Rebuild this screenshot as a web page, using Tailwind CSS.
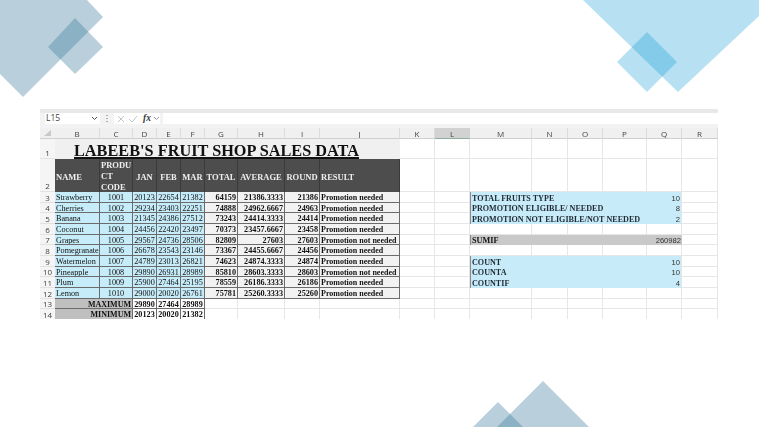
<!DOCTYPE html>
<html lang="en">
<head>
  <meta charset="UTF-8">
  <title>Labeeb's Fruit Shop Sales Data</title>
  <script src="https://cdn.jsdelivr.net/npm/@tailwindcss/browser@4"></script>
</head>
<body class="bg-white">
  <div class="relative w-[759px] h-[427px] overflow-hidden bg-white">
    <!-- background diamonds -->
    <svg class="absolute inset-0" width="759" height="427">
      <g fill="#337699" fill-opacity=".34">
        <polygon points="0,0 87,0 103,17 23,97 0,74"/>
        <polygon points="75,18 103,47 75,74 48,47"/>
        <polygon points="543,381 589,427 497,427"/>
        <polygon points="498,402 523,427 473,427"/>
      </g>
      <g fill="#0798d2" fill-opacity=".29">
        <polygon points="583,0 759,0 759,16 678,92"/>
        <polygon points="647,32 677,62 647,92 617,62"/>
      </g>
    </svg>

    <div class="relative pt-[109px] pl-[40px] w-[718px] font-['Liberation_Serif',serif] blur-[0.3px]">
      <!-- formula bar -->
      <div class="h-[4px] bg-[#e8e8e8]"></div>
      <div class="h-[15px] bg-[#f3f3f3] flex items-start gap-[3px] pl-[5px] font-['Open_Sans',sans-serif] text-[#444]">
        <div class="w-[55px] h-[11px] bg-white flex items-center justify-between pl-[1px] pr-[2px] text-[8.5px]">
          <span>L15</span>
          <svg width="7" height="5" viewBox="0 0 7 5"><path d="M1 1l2.500 2.500L6 1" fill="none" stroke="#555"/></svg>
        </div>
        <div class="w-[8px] h-[11px] flex items-center justify-center">
          <svg width="2" height="7" viewBox="0 0 2 7" fill="#666"><rect x="0.500" width="1" height="1"/><rect x="0.500" y="3" width="1" height="1"/><rect x="0.500" y="6" width="1" height="1"/></svg>
        </div>
        <div class="w-[46px] h-[11px] bg-white flex items-center gap-[3px] pl-[3px]">
          <svg width="8" height="8" viewBox="0 0 8 8"><path d="M1 1l6 6M7 1L1 7" stroke="#c4c4c4" fill="none"/></svg>
          <svg width="10" height="8" viewBox="0 0 10 8"><path d="M1 4l3 3 5-6" stroke="#c4c4c4" fill="none"/></svg>
          <span class="w-[9px] pl-[2px] font-['Liberation_Serif',serif] italic font-bold text-[9.5px] leading-none text-[#333]">fx</span>
          <svg width="7" height="5" viewBox="0 0 7 5"><path d="M1 1l2.500 2.500L6 1" fill="none" stroke="#999"/></svg>
        </div>
        <div class="flex-1 h-[11px] bg-white"></div>
      </div>

      <!-- sheet, filled in by the script below -->
      <div id="sheet" class="h-[191px] overflow-hidden grid grid-cols-[15px_45px_33px_24px_24px_24px_33px_47px_35px_80px_35px_35px_62px_36px_35px_44px_35px_36px] grid-rows-[11px_20px_33px_repeat(12,10.67px)] text-[8.2px] leading-[9px] text-[#111]"></div>
    </div>
  </div>

  <script>
    const sheet = document.getElementById("sheet");

    const cell = (html, className) => {
      const el = document.createElement("div");
      el.className = "flex whitespace-nowrap overflow-hidden min-w-0 px-[1px] " + className;
      el.innerHTML = html;
      sheet.appendChild(el);
    };

    const empty = (n = 1) => {
      for (let i = 0; i < n; i++) cell("", "border-r border-b border-[#e6e6e6]");
    };

    const rowHead = (n) => cell(n, "justify-center bg-[#f5f5f5] border-b border-[#e2e2e2] font-['Open_Sans',sans-serif] text-[8px] text-[#444] " +
      (n < 3 ? "items-end pb-[1px]" : "items-center pt-[1px]"));

    const fruits = [
      ["Strawberry", 1001, 20123, 22654, 21382, 64159, "21386.3333", 21386, "Promotion needed"],
      ["Cherries", 1002, 29234, 23403, 22251, 74888, "24962.6667", 24963, "Promotion needed"],
      ["Banana", 1003, 21345, 24386, 27512, 73243, "24414.3333", 24414, "Promotion needed"],
      ["Coconut", 1004, 24456, 22420, 23497, 70373, "23457.6667", 23458, "Promotion needed"],
      ["Grapes", 1005, 29567, 24736, 28506, 82809, "27603", 27603, "Promotion not needed"],
      ["Pomegranate", 1006, 26678, 23543, 23146, 73367, "24455.6667", 24456, "Promotion needed"],
      ["Watermelon", 1007, 24789, 23013, 26821, 74623, "24874.3333", 24874, "Promotion needed"],
      ["Pineapple", 1008, 29890, 26931, 28989, 85810, "28603.3333", 28603, "Promotion not needed"],
      ["Plum", 1009, 25900, 27464, 25195, 78559, "26186.3333", 26186, "Promotion needed"],
      ["Lemon", 1010, 29000, 20020, 26761, 75781, "25260.3333", 25260, "Promotion needed"]
    ];

    // right hand summary block, keyed by sheet row
    const summary = {
      3: ["TOTAL FRUITS TYPE", 10],
      4: ["PROMOTION ELIGIBLE/ NEEDED", 8],
      5: ["PROMOTION NOT ELIGIBLE/NOT NEEDED", 2],
      9: ["COUNT", 10],
      10: ["COUNTA", 10],
      11: ["COUNTIF", 4]
    };

    const blueLabel = "items-center pt-[1.500px] col-span-4 bg-[#c8ebfa] border-l border-[#8a8a8a] font-bold text-[#1f2a33] text-[8.1px]";
    const blueValue = "items-center pt-[1.500px] justify-end bg-[#c8ebfa] border-r border-[#e6e6e6] font-['Liberation_Sans',sans-serif] text-[7.6px] text-[#333]";

    const summaryCells = (row) => {
      if (summary[row]) {
        cell(summary[row][0], blueLabel);
        cell(summary[row][1], blueValue);
      } else if (row === 7) {
        cell("SUMIF", "items-center pt-[1.500px] col-span-4 bg-[#c9c9c9] border-l border-[#8a8a8a] font-bold");
        cell("260982", "items-center pt-[1.500px] justify-end bg-[#c9c9c9] font-['Liberation_Sans',sans-serif] text-[7.6px] text-[#333]");
      } else {
        empty(5);
      }
    };

    // column letters, with the select-all triangle in the corner
    cell("<svg width=\"7\" height=\"6\" viewBox=\"0 0 7 6\"><polygon points=\"7,0 7,6 0,6\" fill=\"#c8c8c8\"/></svg>",
      "items-center justify-center bg-[#f0f0f0] border-b border-[#cfcfcf]");
    "BCDEFGHIJKLMNOPQR".split("").forEach((letter) => {
      const selected = letter === "L";
      cell(letter, "items-center pt-[1px] justify-center border-r border-b font-['Open_Sans',sans-serif] text-[8px] text-[#444] " +
        (selected ? "bg-[#d2d2d2] border-r-[#d2d2d2] border-b-[#8fae9b]" : "bg-[#f0f0f0] border-r-[#dcdcdc] border-b-[#cfcfcf]"));
    });

    // row 1, title
    rowHead(1);
    cell("<span class=\"underline decoration-[1.500px] underline-offset-[1px] whitespace-pre\">LABEEB'S FRUIT SHOP SALES DATA  </span>",
      "col-span-9 items-end pl-[19px] bg-[#f0f0f0] font-bold text-[16.300px] leading-[17px] text-[#111]");
    empty(8);

    // row 2, table heads
    rowHead(2);
    const head = "bg-[#4d4d4d] border-r border-[#3a3a3a] text-[#eeeeee] font-bold text-[8.5px] ";
    cell("NAME", head + "items-center pt-[3px] pl-[1px]");
    cell("<span>PRODU<br>CT<br>CODE</span>", head + "items-start pt-[1px] leading-[11px]");
    ["JAN", "FEB", "MAR", "TOTAL", "AVERAGE", "ROUND"].forEach((t) => cell(t, head + "items-center pt-[3px] justify-center"));
    cell("RESULT", head + "items-center pt-[3px] pl-[1px]");
    empty(8);

    // rows 3 to 12, one per fruit
    fruits.forEach((f, i) => {
      const row = i + 3;
      const blue = "items-center pt-[1.500px] bg-[#c6ecf9] border-r border-b border-[#6b6b6b] ";
      const grey = "items-center pt-[1.500px] bg-[#f2f2f2] border-r border-b border-[#6b6b6b] font-bold ";
      rowHead(row);
      cell(f[0], blue + "pl-[1px]");
      cell(f[1], blue + "justify-center");
      cell(f[2], blue + "justify-center");
      cell(f[3], blue + "justify-center");
      cell(f[4], blue + "justify-center");
      cell(f[5], grey + "justify-end");
      cell(f[6], grey + "justify-end");
      cell(f[7], grey + "justify-end");
      cell(f[8], grey + "text-[8px]");
      empty(2);
      summaryCells(row);
      empty(1);
    });

    // rows 13 and 14, max and min
    [["MAXIMUM", 29890, 27464, 28989], ["MINIMUM", 20123, 20020, 21382]].forEach((r, i) => {
      const plain = "items-center pt-[1.500px] justify-center border-r border-b border-[#6b6b6b] font-bold";
      rowHead(13 + i);
      cell(r[0], "items-center pt-[1.500px] col-span-2 justify-end bg-[#bfbfbf] border-r border-b border-[#6b6b6b] font-bold text-[8px]");
      cell(r[1], plain);
      cell(r[2], plain);
      cell(r[3], plain);
      empty(12);
    });
  </script>
</body>
</html>
